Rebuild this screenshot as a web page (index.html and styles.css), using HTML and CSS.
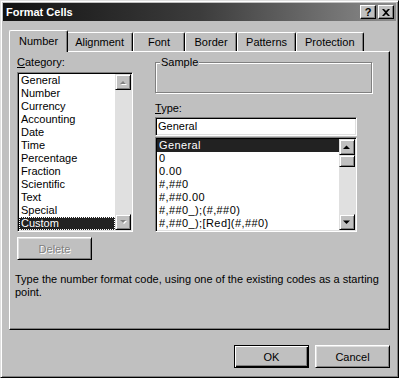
FILE: index.html
```html
<!DOCTYPE html>
<html lang="en">
<head>
    <meta charset="UTF-8">
    <title>Format Cells</title>
    <link rel="stylesheet" href="styles.css">
</head>
<body>
<div class="window">
    <div class="titlebar">
        <span class="title">Format Cells</span>
        <div class="caption-btns">
            <span class="cbtn cbtn-help">?</span>
            <span class="cbtn cbtn-close">
                <svg width="8" height="7" viewBox="0 0 8 7"><path d="M0 0h2l2 2l2-2h2l-3 3.5l3 3.5h-2l-2-2l-2 2h-2l3-3.5z" fill="#000"/></svg>
            </span>
        </div>
    </div>
    <div class="dlg-body">
        <div class="tabs">
            <div class="tab active">Number</div>
            <div class="tab">Alignment</div>
            <div class="tab">Font</div>
            <div class="tab">Border</div>
            <div class="tab">Patterns</div>
            <div class="tab">Protection</div>
        </div>
        <div class="panel">
            <div class="cols">
                <div class="col-left">
                    <div class="label"><u>C</u>ategory:</div>
                    <div class="listbox cat-list">
                        <ul class="items">
                            <li>General</li>
                            <li>Number</li>
                            <li>Currency</li>
                            <li>Accounting</li>
                            <li>Date</li>
                            <li>Time</li>
                            <li>Percentage</li>
                            <li>Fraction</li>
                            <li>Scientific</li>
                            <li>Text</li>
                            <li>Special</li>
                            <li class="sel focus">Custom</li>
                        </ul>
                        <div class="vscroll disabled">
                            <span class="sbtn"><svg width="8" height="5" viewBox="0 0 8 5"><path d="M1 4h6l-3-3z" fill="#fff" transform="translate(1 1)"/><path d="M1 4h6l-3-3z" fill="#808080"/></svg></span>
                            <span class="track"></span>
                            <span class="sbtn"><svg width="8" height="5" viewBox="0 0 8 5"><path d="M1 0h6l-3 3z" fill="#fff" transform="translate(1 1)"/><path d="M1 0h6l-3 3z" fill="#808080"/></svg></span>
                        </div>
                    </div>
                    <button class="btn btn-delete" disabled>Delete</button>
                </div>
                <div class="col-right">
                    <div class="group">
                        <span class="group-label">Sample</span>
                    </div>
                    <div class="label label-type"><u>T</u>ype:</div>
                    <div class="textbox">General</div>
                    <div class="listbox type-list">
                        <ul class="items codes">
                            <li class="sel">General</li>
                            <li>0</li>
                            <li>0.00</li>
                            <li>#,##0</li>
                            <li>#,##0.00</li>
                            <li>#,##0_);(#,##0)</li>
                            <li>#,##0_);[Red](#,##0)</li>
                        </ul>
                        <div class="vscroll">
                            <span class="sbtn"><svg width="8" height="5" viewBox="0 0 8 5"><path d="M0 4h7l-3.5-3.5z" fill="#000"/></svg></span>
                            <span class="thumb"></span>
                            <span class="track"></span>
                            <span class="sbtn"><svg width="8" height="5" viewBox="0 0 8 5"><path d="M0 0.5h7l-3.5 3.5z" fill="#000"/></svg></span>
                        </div>
                    </div>
                </div>
            </div>
            <p class="hint">Type the number format code, using one of the existing codes as a starting point.</p>
        </div>
        <div class="buttons">
            <button class="btn btn-default">OK</button>
            <button class="btn">Cancel</button>
        </div>
    </div>
</div>
</body>
</html>
```

FILE: styles.css
```css
body {
    margin: 0;
    background: #c0c0c0;
    font-family: "Liberation Sans", Arial, sans-serif;
    font-size: 11px;
    color: #000;
}

.window {
    width: 399px;
    height: 378px;
    box-sizing: border-box;
    padding: 2px;
    border: 1px solid;
    border-color: #dfdfdf #000 #000 #dfdfdf;
    box-shadow: inset 1px 1px #fff, inset -1px -1px #808080;
    background: #c0c0c0;
}

.titlebar {
    height: 18px;
    display: flex;
    align-items: center;
    justify-content: space-between;
    background: linear-gradient(90deg, #121212, #3c3c3c 50%, #8c8c8c);
    color: #fff;
}

.title {
    font-weight: bold;
    padding-left: 3px;
}

.caption-btns {
    display: flex;
    gap: 2px;
    padding-right: 2px;
}

.cbtn {
    width: 16px;
    height: 14px;
    box-sizing: border-box;
    display: flex;
    align-items: center;
    justify-content: center;
    background: #c0c0c0;
    color: #000;
    font-weight: bold;
    font-size: 11px;
    border: 1px solid;
    border-color: #fff #000 #000 #fff;
    box-shadow: inset -1px -1px #808080;
}

.dlg-body {
    padding: 9px 6px 0;
}

.tabs {
    display: flex;
    align-items: flex-end;
    height: 21px;
    padding-left: 2px;
}

.tab {
    height: 19px;
    min-width: 52px;
    box-sizing: border-box;
    padding: 3px 8px 0;
    line-height: 13px;
    text-align: center;
    border: 1px solid;
    border-bottom: 0;
    border-color: #fff #000 #fff #fff;
    border-radius: 2px 2px 0 0;
    box-shadow: inset -1px 0 #808080;
}

.tab.active {
    position: relative;
    z-index: 1;
    height: 22px;
    margin: 0 -2px -1px;
    padding: 4px 9px 0;
    background: #c0c0c0;
}

.panel {
    height: 279px;
    box-sizing: border-box;
    padding: 4px 7px 0;
    border: 1px solid;
    border-color: #fff #000 #000 #fff;
    box-shadow: inset -1px -1px #808080;
}

.cols {
    display: flex;
    gap: 22px;
}

.col-left {
    width: 116px;
}

.col-right {
    width: 217px;
}

.label {
    height: 13px;
    line-height: 13px;
}

.listbox {
    display: flex;
    box-sizing: border-box;
    border: 1px solid;
    border-color: #808080 #fff #fff #808080;
    box-shadow: inset 1px 1px #000, inset -1px -1px #dfdfdf;
    padding: 1px;
    background: #fff;
}

.cat-list {
    margin-top: 3px;
    height: 160px;
}

.type-list {
    width: 202px;
    height: 95px;
}

.items {
    flex: 1;
    margin: 0;
    padding: 0;
    list-style: none;
    overflow: hidden;
}

.items li {
    height: 13px;
    line-height: 13px;
    padding-left: 2px;
    white-space: nowrap;
}

.codes li {
    letter-spacing: 0.4px;
}

.items li.sel {
    background: #222;
    color: #fff;
}

.items li.focus {
    outline: 1px dotted #fff;
    outline-offset: -1px;
}

.vscroll {
    width: 16px;
    display: flex;
    flex-direction: column;
    background: #e0e0e0;
}

.vscroll .track {
    flex: 1;
}

.sbtn,
.thumb {
    box-sizing: border-box;
    background: #c0c0c0;
    border: 1px solid;
    border-color: #dfdfdf #000 #000 #dfdfdf;
    box-shadow: inset 1px 1px #fff, inset -1px -1px #808080;
}

.sbtn {
    height: 16px;
    display: flex;
    align-items: center;
    justify-content: center;
}

.thumb {
    height: 12px;
}

.btn {
    width: 75px;
    height: 23px;
    box-sizing: border-box;
    padding: 0;
    font: inherit;
    color: #000;
    background: #c0c0c0;
    border: 1px solid;
    border-color: #fff #000 #000 #fff;
    box-shadow: inset 1px 1px #dfdfdf, inset -1px -1px #808080;
}

.btn-delete {
    margin-top: 5px;
}

.btn:disabled {
    color: #808080;
    text-shadow: 1px 1px #fff;
}

.btn-default {
    border-color: #000;
    box-shadow: inset 1px 1px #fff, inset -1px -1px #000, inset -2px -2px #808080;
}

.group {
    position: relative;
    margin-top: 6px;
    height: 29px;
    border: 1px solid #808080;
    box-shadow: inset 1px 1px #fff, 1px 1px #fff;
}

.group-label {
    position: absolute;
    top: -7px;
    left: 4px;
    line-height: 13px;
    padding: 0 1px;
    background: #c0c0c0;
}

.label-type {
    margin-top: 9px;
}

.textbox {
    width: 202px;
    height: 19px;
    box-sizing: border-box;
    margin: 2px 0 1px;
    padding: 1px 2px;
    line-height: 15px;
    background: #fff;
    border: 1px solid;
    border-color: #808080 #fff #fff #808080;
    box-shadow: inset 1px 1px #000, inset -1px -1px #dfdfdf;
}

.hint {
    margin: 13px -8px 0 -2px;
    line-height: 13px;
}

.buttons {
    display: flex;
    justify-content: flex-end;
    gap: 6px;
    margin-top: 15px;
}
```
